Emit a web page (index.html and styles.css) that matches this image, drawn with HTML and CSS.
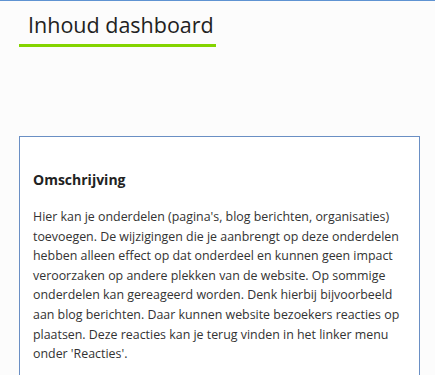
FILE: index.html
```html
<!DOCTYPE html>
<html lang="nl">
<head>
    <meta charset="UTF-8">
    <meta name="viewport" content="width=device-width, initial-scale=1.0">
    <title>Inhoud dashboard</title>
    <link rel="stylesheet" href="styles.css">
</head>
<body>
    <div class="page">
        <h1 class="page-title">Inhoud dashboard</h1>

        <div class="info-box">
            <h2>Omschrijving</h2>
            <p>Hier kan je onderdelen (pagina's, blog berichten, organisaties) toevoegen. De wijzigingen die je aanbrengt op deze onderdelen hebben alleen effect op dat onderdeel en kunnen geen impact veroorzaken op andere plekken van de website. Op sommige onderdelen kan gereageerd worden. Denk hierbij bijvoorbeeld aan blog berichten. Daar kunnen website bezoekers reacties op plaatsen. Deze reacties kan je terug vinden in het linker menu onder 'Reacties'.</p>
        </div>
    </div>
</body>
</html>
```

FILE: styles.css
```css
* {
    box-sizing: border-box;
}
body {
    margin: 0;
    font-family: 'Open Sans', 'Noto Sans', sans-serif;
    background-color: #fcfcfc;
    color: #333;
    border-top: 1px solid #5f93d2;
}
.page {
    padding: 0 15px 0 19px;
}
.page-title {
    display: inline-block;
    margin: 8px 0 0;
    padding: 0 2px 3px 9px;
    font-size: 21.5px;
    font-weight: 400;
    line-height: 32px;
    color: #222;
    border-bottom: 3px solid #84d400;
}
.info-box {
    margin-top: 89px;
    padding: 33px 13px 20px;
    border: 1px solid #6a8fc4;
    background-color: #fff;
}
.info-box h2 {
    margin: 0 0 17px;
    font-size: 14px;
    font-weight: 700;
    line-height: 20px;
    color: #222;
}
.info-box p {
    margin: 0;
    font-size: 12.4px;
    line-height: 19.6px;
}
```
